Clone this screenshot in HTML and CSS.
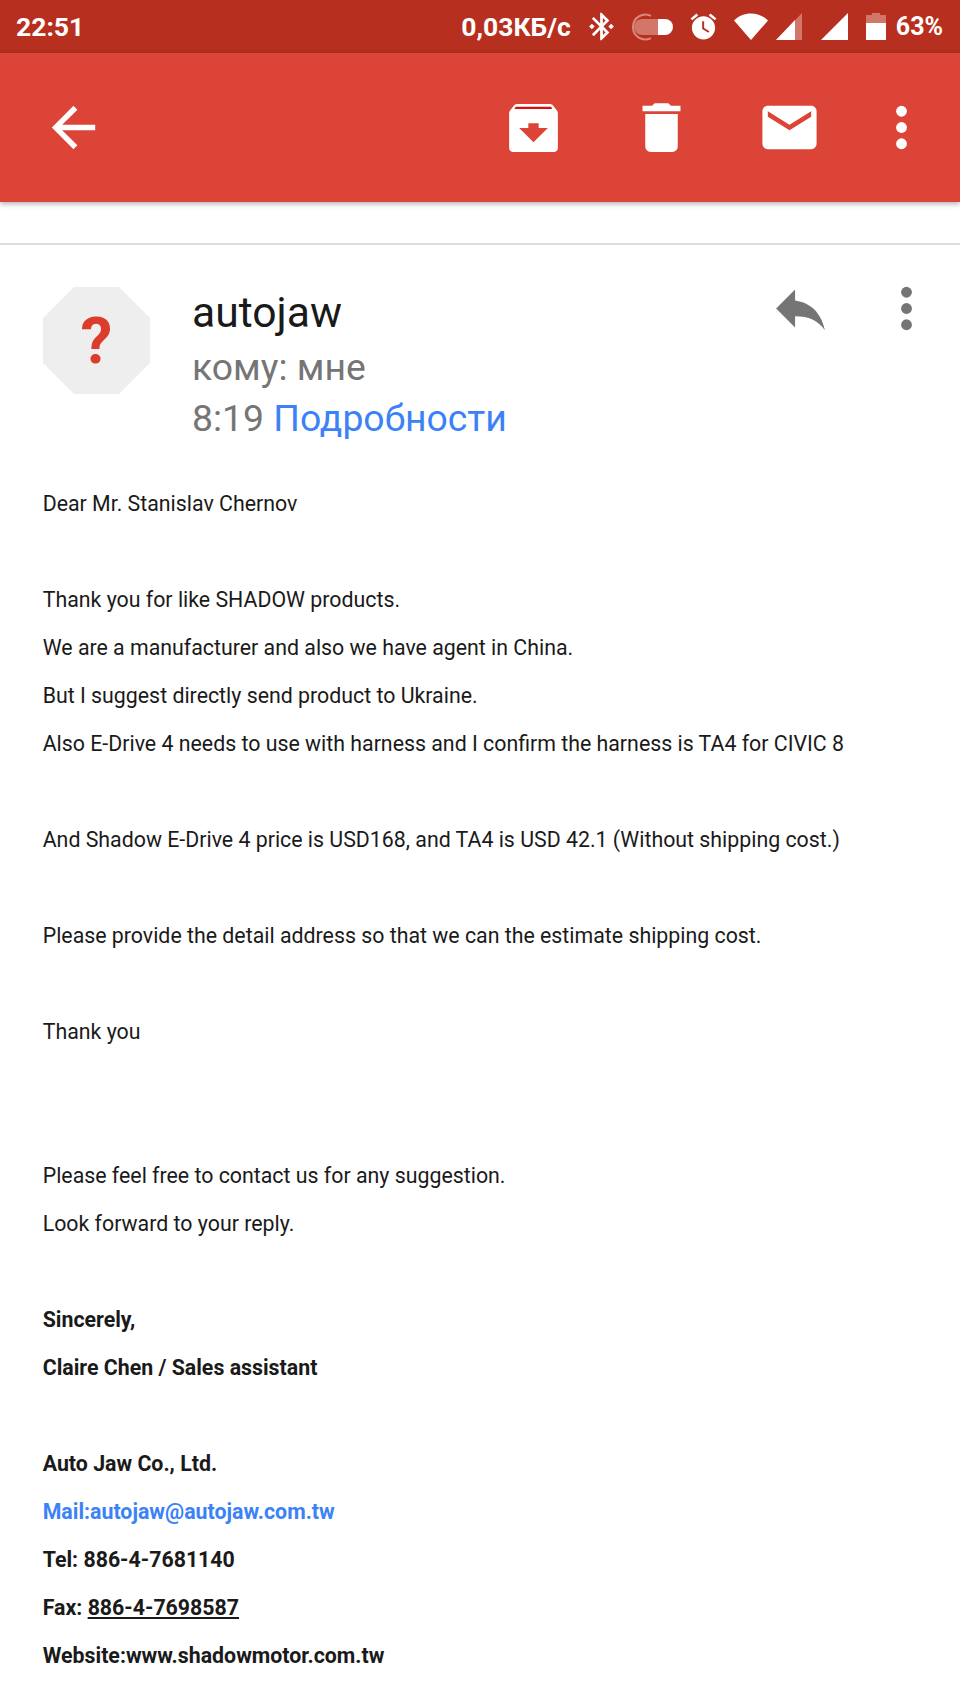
FILE: index.html
```html
<html>
<head>
<title>autojaw</title>
<meta charset="utf-8" />
<link rel="stylesheet" href="styles.css">
</head>
<body>

<div class="status">
<span class="clock">22:51</span>
<span class="speed">0,03КБ/с</span>
<svg class="st-bt" width="33" height="33" viewBox="0 0 24 24"><path fill="#fff" d="M7 12l-2-2-2 2 2 2 2-2zm10.71-4.29L12 2h-1v7.59L6.41 5 5 6.41 10.59 12 5 17.59 6.41 19 11 14.41V22h1l5.71-5.71-4.3-4.29 4.3-4.29zM13 5.83l1.88 1.88L13 9.59V5.83zm1.88 10.46L13 18.17v-3.76l1.88 1.88zM19 10l-2 2 2 2 2-2-2-2z"/></svg>
<svg class="st-toggle" width="43" height="28" viewBox="0 0 43 28"><path fill="none" stroke="#d98a80" stroke-width="2" d="M21 2.8A12.5 12.5 0 1 0 21 25.2"/><path fill="#d2766a" d="M12 6h16v16H12a8 8 0 0 1 0-16z"/><path fill="#fff" d="M28 6h7a8 8 0 0 1 0 16h-7z"/></svg>
<svg class="st-alarm" width="31" height="31" viewBox="0 0 24 24"><path fill="#fff" d="M22 5.72l-4.6-3.86-1.29 1.53 4.6 3.86L22 5.72zM7.88 3.39L6.6 1.86 2 5.71l1.29 1.53 4.59-3.85zM12 4c-4.97 0-9 4.03-9 9s4.02 9 9 9c4.97 0 9-4.03 9-9s-4.03-9-9-9z"/><path fill="#b72f1e" d="M12.5 8H11v6l4.75 2.85.75-1.23-4-2.37V8z"/></svg>
<svg class="st-wifi" width="34" height="28" viewBox="0 0 34 28"><path fill="#fff" d="M0 7.500C4.500 3 10.500 0.500 17 0.500S29.500 3 34 7.500L17 27z"/></svg>
<svg class="st-sig1" width="26" height="27" viewBox="0 0 26 27"><path fill="#d2766a" d="M26 0v27H0z"/><path fill="#fff" d="M19 7v20H0z"/></svg>
<svg class="st-sig2" width="27" height="27" viewBox="0 0 27 27"><path fill="#fff" d="M27 0v27H0z"/></svg>
<svg class="st-batt" width="20" height="27" viewBox="0 0 20 27"><path fill="#d2766a" d="M6 0h8v2h6v9H0V2h6z"/><path fill="#fff" d="M0 10h20v17H0z"/></svg>
<span class="pct">63%</span>
</div>

<div class="toolbar">
<svg class="back" width="65" height="65" viewBox="0 0 24 24"><path fill="#fff" d="M20 11H7.83l5.59-5.59L12 4l-8 8 8 8 1.41-1.41L7.83 13H20v-2z"/></svg>
<div class="actions">
<svg width="65" height="65" viewBox="0 0 24 24"><path fill="#fff" d="M6 3.300h12c.5 0 .9.2 1.200.55l1.300 1.700c.3.35.5.8.5 1.250V19.700c0 .7-.6 1.300-1.300 1.300H4.300C3.600 21 3 20.400 3 19.700V6.800c0-.45.2-.9.5-1.250l1.300-1.700C5.100 3.500 5.500 3.300 6 3.300z"/><path fill="#db0f0f" d="M5.500 4.300h13l.4.9H4.900z"/><path fill="#db4437" d="M10.100 10.400h3.800v1.800h3.400L12 17.400l-5.300-5.200h3.400z"/></svg>
<svg width="65" height="65" viewBox="0 0 24 24"><path fill="#fff" d="M6 19c0 1.100.9 2 2 2h8c1.100 0 2-.9 2-2V7H6v12zM19 4h-3.500l-1-1h-5l-1 1H5v2h14V4z"/></svg>
<svg width="65" height="65" viewBox="0 0 24 24"><path fill="#fff" d="M20 4H4c-1.100 0-2 .9-2 2v12c0 1.100.9 2 2 2h16c1.100 0 2-.9 2-2V6c0-1.100-.9-2-2-2zm0 4l-8 5-8-5V6l8 5 8-5v2z"/></svg>
<svg class="more" width="65" height="65" viewBox="0 0 24 24"><circle fill="#fff" cx="12" cy="6" r="2"/><circle fill="#fff" cx="12" cy="12" r="2"/><circle fill="#fff" cx="12" cy="18" r="2"/></svg>
</div>
</div>

<div class="gap"></div>

<div class="head">
<div class="avatar">?</div>
<div class="who">
<div class="name">autojaw</div>
<div class="sub">кому: мне</div>
<div class="sub">8:19 <span class="link">Подробности</span></div>
</div>
<div class="head-actions">
<svg width="65" height="65" viewBox="0 0 24 24"><path fill="#757575" d="M10 9V5l-7 7 7 7v-4.100c5 0 8.500 1.600 11 5.100-1-5-4-10-11-11z"/></svg>
<svg width="65" height="65" viewBox="0 0 24 24"><circle fill="#757575" cx="12" cy="6" r="2"/><circle fill="#757575" cx="12" cy="12" r="2"/><circle fill="#757575" cx="12" cy="18" r="2"/></svg>
</div>
</div>

<div class="message">
<div>Dear Mr. Stanislav Chernov</div>
<div>&nbsp;</div>
<div>Thank you for like SHADOW products.</div>
<div>We are a manufacturer and also we have agent in China.</div>
<div>But I suggest directly send product to Ukraine.</div>
<div>Also E-Drive 4 needs to use with harness and I confirm the harness is TA4 for CIVIC 8</div>
<div>&nbsp;</div>
<div>And Shadow E-Drive 4 price is USD168, and TA4 is USD 42.1 (Without shipping cost.)</div>
<div>&nbsp;</div>
<div>Please provide the detail address so that we can the estimate shipping cost.</div>
<div>&nbsp;</div>
<div>Thank you</div>
<div>&nbsp;</div>
<div>&nbsp;</div>
<div>Please feel free to contact us for any suggestion.</div>
<div>Look forward to your reply.</div>
<div>&nbsp;</div>
<div class="sign">Sincerely,</div>
<div class="sign">Claire Chen / Sales assistant</div>
<div>&nbsp;</div>
<div class="sign">Auto Jaw Co., Ltd.</div>
<div class="sign link">Mail:autojaw@autojaw.com.tw</div>
<div class="sign">Tel: 886-4-7681140</div>
<div class="sign">Fax: <u>886-4-7698587</u></div>
<div class="sign">Website:www.shadowmotor.com.tw</div>
</div>

</body>
</html>
```

FILE: styles.css
```css
body {
    margin: 0;
    width: 960px;
    height: 1707px;
    overflow: hidden;
    background-color: #fff;
    font-family: Roboto, sans-serif;
    color: #1a1a1a;
}

.status {
    display: flex;
    align-items: center;
    height: 53px;
    padding: 0 17px 0 16px;
    background-color: #b72f1e;
    color: #fff;
    font-size: 26.5px;
    font-weight: 700;
}

.status svg {
    flex: none;
}

.speed {
    margin-left: auto;
}

.st-bt { margin-left: 14px; }
.st-toggle { margin-left: 12px; }
.st-alarm { margin-left: 15px; }
.st-wifi { margin-left: 15px; }
.st-sig1 { margin-left: 8px; }
.st-sig2 { margin-left: 19px; }
.st-batt { margin-left: 18px; }
.pct { margin-left: 10px; font-size: 25px; }

.toolbar {
    position: relative;
    display: flex;
    align-items: center;
    justify-content: space-between;
    height: 149px;
    padding: 0 26px 0 41px;
    background-color: #db4437;
    box-shadow: 0 2px 5px rgba(0, 0, 0, 0.3);
}

.actions {
    display: flex;
    gap: 63px;
}

.more {
    margin-left: -16px;
}

.gap {
    height: 41px;
    border-bottom: 2px solid #ddd;
}

.head {
    display: flex;
    padding: 42px 21px 0 43px;
    height: 235px;
    box-sizing: border-box;
}

.avatar {
    flex: none;
    width: 107px;
    height: 107px;
    background-color: #eee;
    clip-path: polygon(29% 0, 71% 0, 100% 29%, 100% 71%, 71% 100%, 29% 100%, 0 71%, 0 29%);
    color: #dc3c2b;
    font-size: 64px;
    font-weight: 700;
    line-height: 110px;
    text-align: center;
}

.who {
    margin-left: 42px;
    margin-top: -2px;
}

.name {
    color: #1a1a1a;
    font-size: 42.67px;
    line-height: 54px;
    margin-bottom: 3px;
}

.sub {
    color: #757575;
    font-size: 37.33px;
    line-height: 51px;
}

.link {
    color: #3b82f6;
}

.head-actions {
    display: flex;
    gap: 41px;
    margin-left: auto;
    margin-top: -11px;
}

.message {
    padding-left: 42.7px;
    font-size: 21.33px;
    line-height: 48px;
}

.sign {
    font-weight: 700;
}
```
